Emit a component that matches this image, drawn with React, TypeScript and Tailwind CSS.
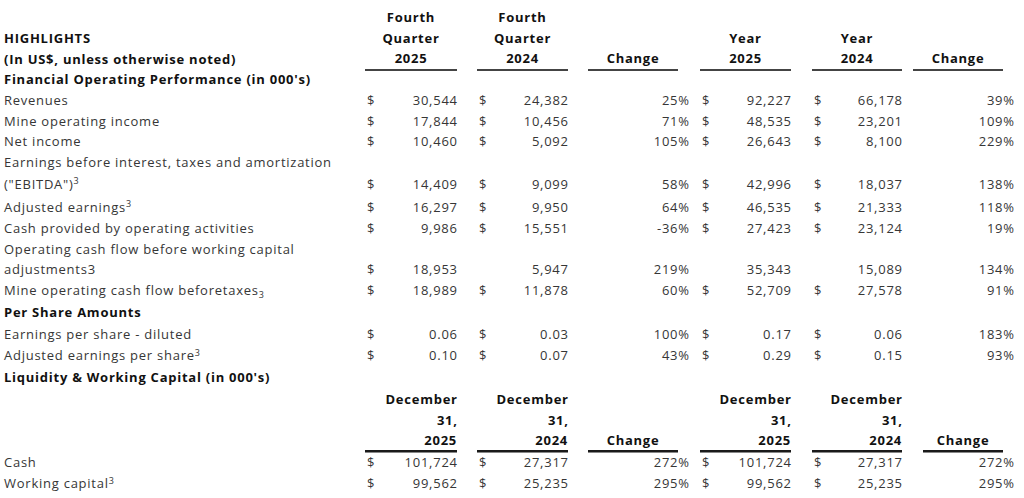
import React from 'react';

type Cell = { d?: boolean; v: string };

const COLS = 'grid grid-cols-[365px_92px_20px_91px_20px_101px_11px_91px_21px_90px_11px_101px]';

function Money({ c }: { c?: Cell }) {
    if (!c) return <div />;
    return (
        <div className="flex justify-between pl-[2px] -mr-[0.75px]">
            <span>{c.d ? '$' : ''}</span>
            <span>{c.v}</span>
        </div>
    );
}

function DataRow({ label, h, cells, bold }: { label: React.ReactNode; h: string; cells?: (Cell | undefined)[]; bold?: boolean }) {
    const c = cells || [];
    return (
        <div className={`${COLS} items-center ${h}`}>
            <div className={`pl-[4px] whitespace-nowrap ${bold ? 'font-bold text-[#111]' : ''}`}>{label}</div>
            <Money c={c[0]} />
            <div />
            <Money c={c[1]} />
            <div />
            <div className="text-right -mr-[0.75px]">{c[2]?.v}</div>
            <div />
            <Money c={c[3]} />
            <div />
            <Money c={c[4]} />
            <div />
            <div className="text-right -mr-[0.75px]">{c[5]?.v}</div>
        </div>
    );
}

const S = (v: string): Cell => ({ d: true, v });
const N = (v: string): Cell => ({ v });

function Sup() {
    return <sup className="text-[9px]">3</sup>;
}

export default function App() {
    const u = 'border-b-2 border-[#444]';
    const lu = 'border-b-2 border-[#1a1a1a] shadow-[0_1px_0_#888]';
    return (
        <div className="w-[1024px] h-[498px] bg-white pt-[7px] text-[13px] tracking-[0.75px] text-[#363636] overflow-hidden" style={{ fontFamily: '"Open Sans", sans-serif' }}>
            <div className="font-bold text-[#111]">
                <div className={`${COLS} items-center h-[21px]`}>
                    <div />
                    <div className="text-center">Fourth</div>
                    <div />
                    <div className="text-center">Fourth</div>
                </div>
                <div className={`${COLS} items-center h-[21px]`}>
                    <div className="pl-[4px]">HIGHLIGHTS</div>
                    <div className="text-center">Quarter</div>
                    <div />
                    <div className="text-center">Quarter</div>
                    <div />
                    <div />
                    <div />
                    <div className="text-center">Year</div>
                    <div />
                    <div className="text-center">Year</div>
                </div>
                <div className={`${COLS} h-[21px]`}>
                    <div className="pl-[4px] flex items-center">(In US$, unless otherwise noted)</div>
                    <div className={`text-center flex items-center justify-center ${u}`}>2025</div>
                    <div />
                    <div className={`text-center flex items-center justify-center ${u}`}>2024</div>
                    <div />
                    <div className={`w-[90px] flex items-center justify-center ${u}`}>Change</div>
                    <div />
                    <div className={`flex items-center justify-center ${u}`}>2025</div>
                    <div />
                    <div className={`flex items-center justify-center ${u}`}>2024</div>
                    <div />
                    <div className={`w-[90px] flex items-center justify-center ${u}`}>Change</div>
                </div>
            </div>

            <DataRow bold h="h-[20px]" label="Financial Operating Performance (in 000's)" />
            <DataRow h="h-[21px]" label="Revenues" cells={[S('30,544'), S('24,382'), N('25%'), S('92,227'), S('66,178'), N('39%')]} />
            <DataRow h="h-[20.5px]" label="Mine operating income" cells={[S('17,844'), S('10,456'), N('71%'), S('48,535'), S('23,201'), N('109%')]} />
            <DataRow h="h-[20.5px]" label="Net income" cells={[S('10,460'), S('5,092'), N('105%'), S('26,643'), S('8,100'), N('229%')]} />
            <DataRow h="h-[21px]" label="Earnings before interest, taxes and amortization" />
            <DataRow h="h-[23px]" label={<>("EBITDA")<Sup /></>} cells={[S('14,409'), S('9,099'), N('58%'), S('42,996'), S('18,037'), N('138%')]} />
            <DataRow h="h-[22.5px]" label={<>Adjusted earnings<Sup /></>} cells={[S('16,297'), S('9,950'), N('64%'), S('46,535'), S('21,333'), N('118%')]} />
            <DataRow h="h-[20.5px]" label="Cash provided by operating activities" cells={[S('9,986'), S('15,551'), N('-36%'), S('27,423'), S('23,124'), N('19%')]} />
            <DataRow h="h-[20.5px]" label="Operating cash flow before working capital" />
            <DataRow h="h-[20.5px]" label="adjustments3" cells={[S('18,953'), N('5,947'), N('219%'), N('35,343'), N('15,089'), N('134%')]} />
            <DataRow h="h-[22px]" label={<>Mine operating cash flow beforetaxes<sub className="text-[9px]">3</sub></>} cells={[S('18,989'), S('11,878'), N('60%'), S('52,709'), S('27,578'), N('91%')]} />
            <DataRow bold h="h-[22px]" label="Per Share Amounts" />
            <DataRow h="h-[21px]" label="Earnings per share - diluted" cells={[S('0.06'), S('0.03'), N('100%'), S('0.17'), S('0.06'), N('183%')]} />
            <DataRow h="h-[22px]" label={<>Adjusted earnings per share<Sup /></>} cells={[S('0.10'), S('0.07'), N('43%'), S('0.29'), S('0.15'), N('93%')]} />
            <DataRow bold h="h-[21.5px]" label="Liquidity & Working Capital (in 000's)" />

            <div className="font-bold text-[#111]">
                <div className={`${COLS} items-center h-[21.5px]`}>
                    <div />
                    <div className="text-right -mr-[0.75px]">December</div>
                    <div />
                    <div className="text-right -mr-[0.75px]">December</div>
                    <div />
                    <div />
                    <div />
                    <div className="text-right -mr-[0.75px]">December</div>
                    <div />
                    <div className="text-right -mr-[0.75px]">December</div>
                </div>
                <div className={`${COLS} items-center h-[20.5px]`}>
                    <div />
                    <div className="text-right -mr-[0.75px]">31,</div>
                    <div />
                    <div className="text-right -mr-[0.75px]">31,</div>
                    <div />
                    <div />
                    <div />
                    <div className="text-right -mr-[0.75px]">31,</div>
                    <div />
                    <div className="text-right -mr-[0.75px]">31,</div>
                </div>
                <div className={`${COLS} h-[21px]`}>
                    <div />
                    <div className={`flex items-center justify-end ${lu}`}>2025</div>
                    <div />
                    <div className={`flex items-center justify-end ${lu}`}>2024</div>
                    <div />
                    <div className={`w-[90px] flex items-center justify-center ${lu}`}>Change</div>
                    <div />
                    <div className={`flex items-center justify-end ${lu}`}>2025</div>
                    <div />
                    <div className={`flex items-center justify-end ${lu}`}>2024</div>
                    <div />
                    <div className={`ml-[10px] w-[80px] flex items-center justify-center ${lu}`}>Change</div>
                </div>
            </div>
            <DataRow h="h-[21.5px]" label="Cash" cells={[S('101,724'), S('27,317'), N('272%'), S('101,724'), S('27,317'), N('272%')]} />
            <DataRow h="h-[21.5px]" label={<>Working capital<Sup /></>} cells={[S('99,562'), S('25,235'), N('295%'), S('99,562'), S('25,235'), N('295%')]} />
        </div>
    );
}
